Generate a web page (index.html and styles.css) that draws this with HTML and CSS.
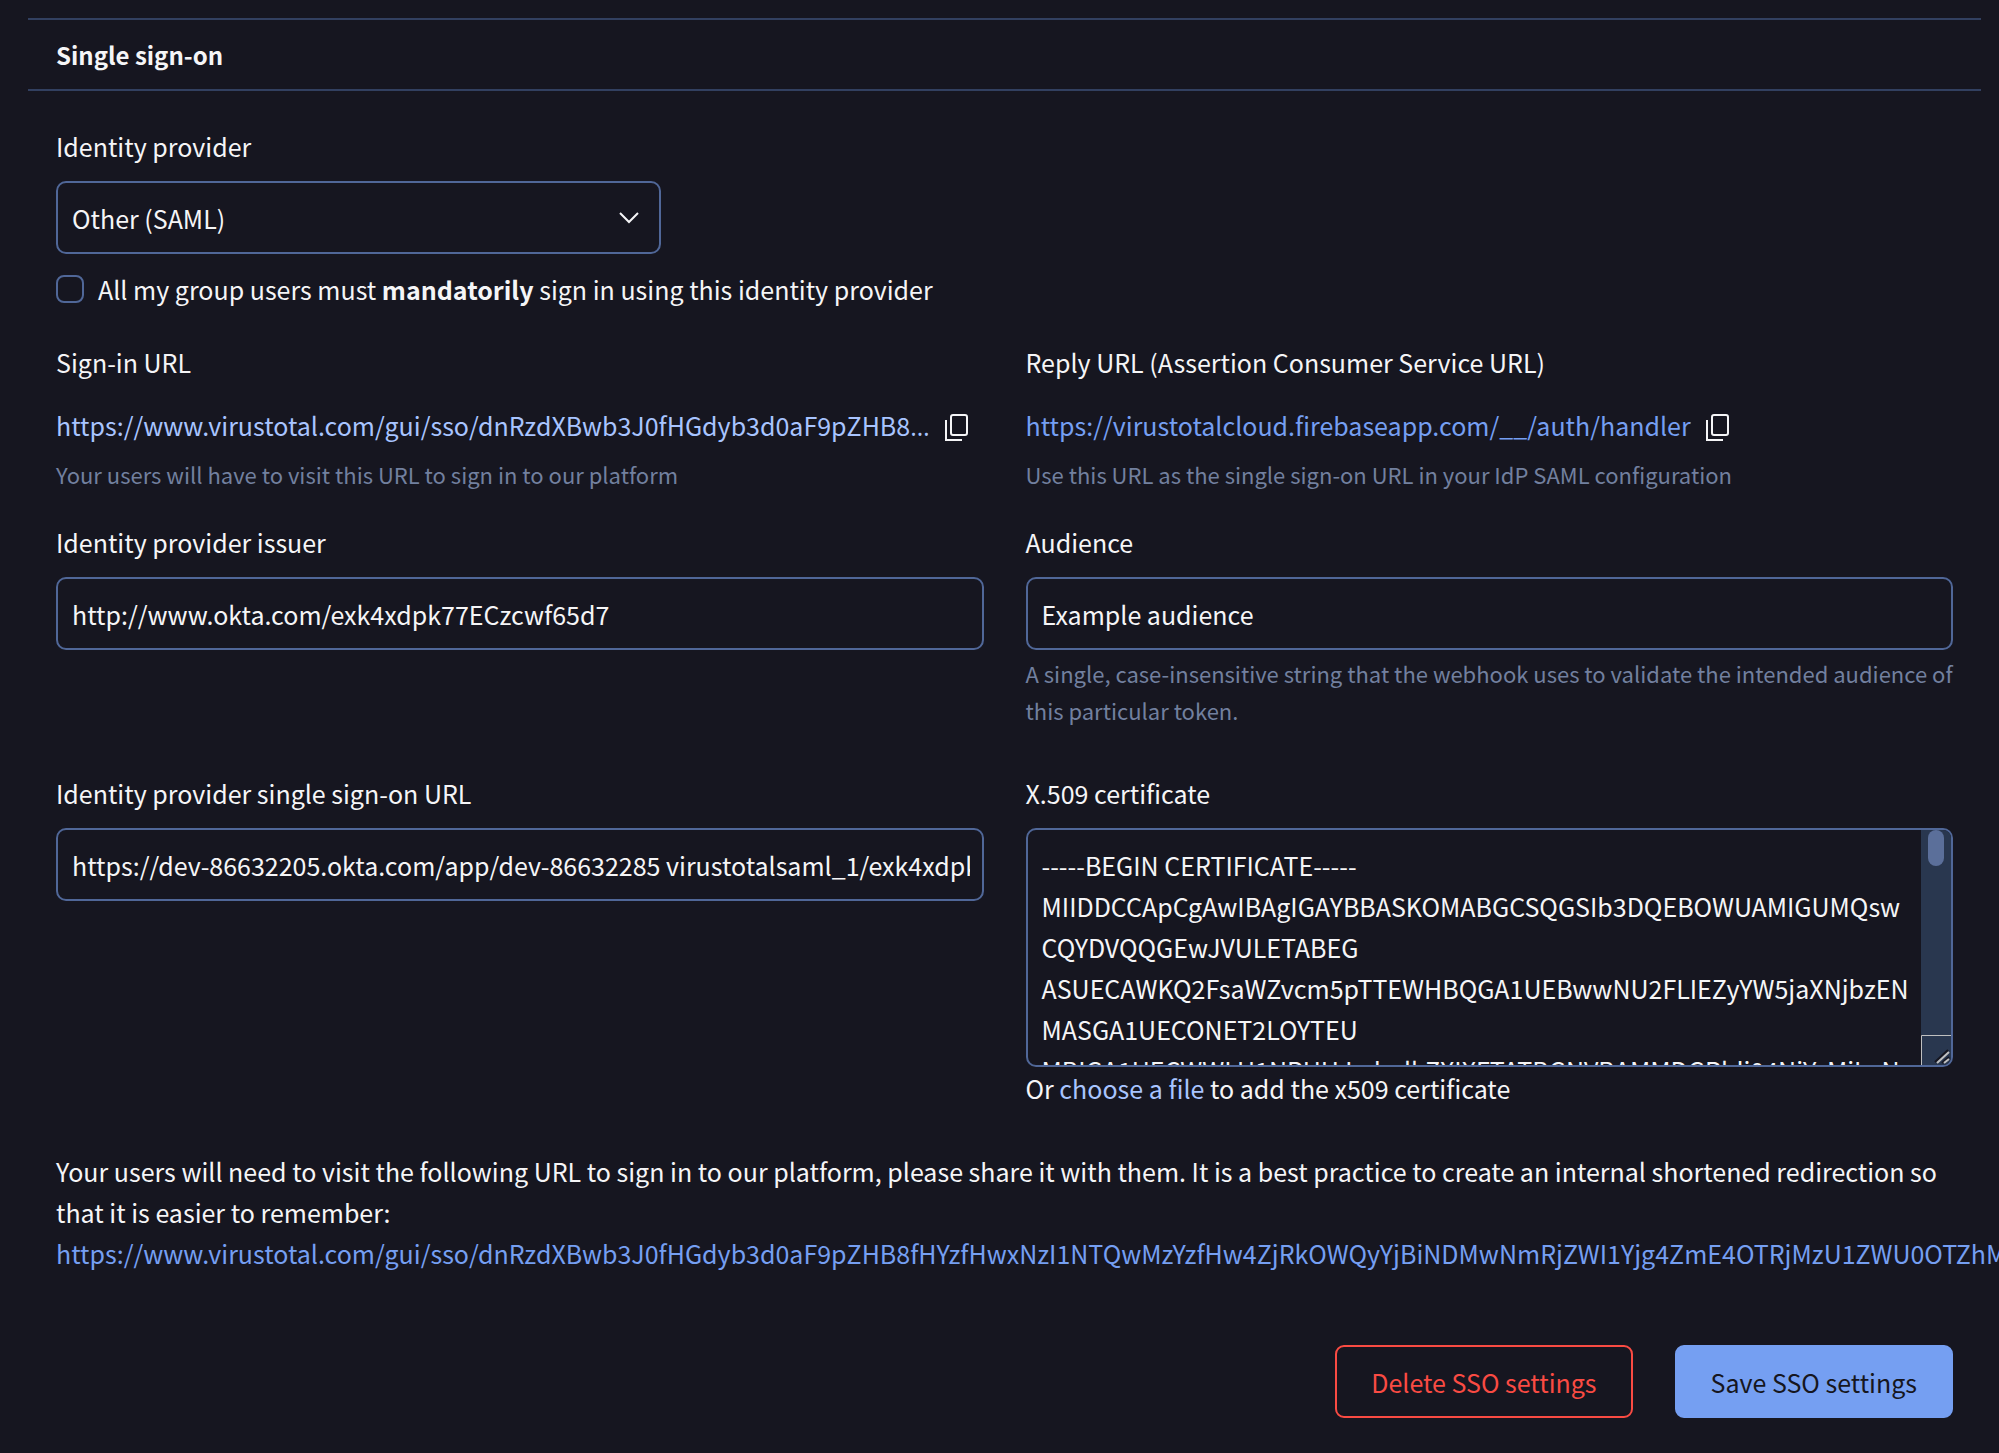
FILE: index.html
```html
<!DOCTYPE html>
<html lang="en">
<head>
<meta charset="utf-8">
<meta name="viewport" content="width=device-width, initial-scale=1">
<title>Single sign-on</title>
<link rel="stylesheet" href="styles.css">
</head>
<body>
<form class="sso">
  <h2 class="sso-title">Single sign-on</h2>
  <div class="sso-body">
    <div class="provider">
      <label class="label" for="provider">Identity provider</label>
      <div class="select">
        <select class="control" id="provider"><option>Other (SAML)</option></select>
        <svg class="chevron" viewBox="0 0 20 12" aria-hidden="true"><path d="M1 1l9 9 9-9"/></svg>
      </div>
    </div>
    <div class="check">
      <input class="check-box" type="checkbox" id="mandatory">
      <label for="mandatory">All my group users must <strong>mandatorily</strong> sign in using this identity provider</label>
    </div>
    <div class="grid">
      <div class="field">
        <h3 class="label">Sign-in URL</h3>
        <div class="url-row">
          <a class="url url-soft" href="#">https://www.virustotal.com/gui/sso/dnRzdXBwb3J0fHGdyb3d0aF9pZHB8<span class="ellipsis">…</span></a>
          <button class="copy" type="button" aria-label="Copy sign-in URL"><svg viewBox="0 -5 24 32" aria-hidden="true"><rect x="7" y="1" width="16" height="20" rx="2"/><path d="M2 6v20h16"/></svg></button>
        </div>
        <p class="hint">Your users will have to visit this URL to sign in to our platform</p>
      </div>
      <div class="field">
        <h3 class="label">Reply URL (Assertion Consumer Service URL)</h3>
        <div class="url-row">
          <a class="url" href="#">https://virustotalcloud.firebaseapp.com/__/auth/handler</a>
          <button class="copy" type="button" aria-label="Copy reply URL"><svg viewBox="0 -5 24 32" aria-hidden="true"><rect x="7" y="1" width="16" height="20" rx="2"/><path d="M2 6v20h16"/></svg></button>
        </div>
        <p class="hint">Use this URL as the single sign-on URL in your IdP SAML configuration</p>
      </div>
    </div>
    <div class="grid">
      <div class="field">
        <label class="label" for="issuer">Identity provider issuer</label>
        <input class="control" id="issuer" type="text" value="http://www.okta.com/exk4xdpk77ECzcwf65d7">
      </div>
      <div class="field">
        <label class="label" for="audience">Audience</label>
        <input class="control" id="audience" type="text" value="Example audience">
        <p class="hint">A single, case-insensitive string that the webhook uses to validate the intended audience of this particular token.</p>
      </div>
    </div>
    <div class="grid grid-certificate">
      <div class="field">
        <label class="label" for="sso-url">Identity provider single sign-on URL</label>
        <input class="control" id="sso-url" type="text" value="https://dev-86632205.okta.com/app/dev-86632285 virustotalsaml_1/exk4xdpk77ECzcwf65d7/sso/saml">
      </div>
      <div class="field">
        <label class="label" for="certificate">X.509 certificate</label>
        <div class="certificate-box">
          <textarea class="control certificate" id="certificate">-----BEGIN CERTIFICATE-----
MIIDDCCApCgAwIBAgIGAYBBASKOMABGCSQGSIb3DQEBOWUAMIGUMQsw
CQYDVQQGEwJVULETABEG
ASUECAWKQ2FsaWZvcm5pTTEWHBQGA1UEBwwNU2FLIEZyYW5jaXNjbzEN
MASGA1UECONET2LOYTEU
MBIGA1UECWWLU1NPUHJvdmlkZXIXFTATBGNVBAMMDGRldi04NjYzMjIwN
TEcMBoGCSqGSIb3DQEJ
-----END CERTIFICATE-----</textarea>
          <div class="scroll-track" aria-hidden="true">
            <span class="scroll-thumb"></span>
            <svg class="scroll-grip" viewBox="0 0 30 30"><path class="grip-frame" d="M0.500 30V0.500H30"/><path class="grip-shade" d="M14 27l13-12M21 28l7-6"/><path class="grip-line" d="M16 28l12-11M23 28l5-4"/></svg>
          </div>
        </div>
        <p>Or <a class="link-soft" href="#">choose a file</a> to add the x509 certificate</p>
      </div>
    </div>
    <p class="share">Your users will need to visit the following URL to sign in to our platform, please share it with them. It is a best practice to create an internal shortened redirection so that it is easier to remember: <a class="share-url" href="#">https://www.virustotal.com/gui/sso/dnRzdXBwb3J0fHGdyb3d0aF9pZHB8fHYzfHwxNzI1NTQwMzYzfHw4ZjRkOWQyYjBiNDMwNmRjZWI1Yjg4ZmE4OTRjMzU1ZWU0OTZhMGQ5</a></p>
    <div class="actions">
      <button class="button button-danger" type="button">Delete SSO settings</button>
      <button class="button button-primary" type="submit">Save SSO settings</button>
    </div>
  </div>
</form>
</body>
</html>
```

FILE: styles.css
```css
:root {
  --bg: #161620;
  --text: #f5f5f7;
  --line: #324060;
  --border: #506798;
  --link: #759ff2;
  --link-soft: #a8c4ff;
  --muted: #72809f;
  --track: #29374f;
  --thumb: #5b6f9a;
  --danger: #fa4b43;
}

* {
  box-sizing: border-box;
}

body {
  margin: 0;
  overflow-x: hidden;
  background: var(--bg);
  color: var(--text);
  font: 25px/42px "Noto Sans CJK SC", "Noto Sans", sans-serif;
}

a {
  color: var(--link);
  text-decoration: none;
}

h2, h3, p {
  margin: 0;
}

button, input, select, textarea {
  margin: 0;
  color: inherit;
  font: inherit;
}

.sso {
  padding: 18px 18px 34px 28px;
}

.sso-title {
  padding: 14px 28px;
  border-top: 2px solid var(--line);
  border-bottom: 2px solid var(--line);
  font-size: 24px;
  font-weight: 700;
  line-height: 41px;
}

.sso-body {
  padding: 34px 28px 0;
}

.label {
  display: block;
  margin-bottom: 14px;
  font-size: 25px;
  font-weight: 400;
}

.control {
  display: block;
  width: 100%;
  height: 73px;
  padding: 0 12px 0 14px;
  border: 2px solid var(--border);
  border-radius: 10px;
  background: transparent;
  outline: none;
}

.provider {
  max-width: 605px;
}

.select {
  display: grid;
  align-items: center;
}

.select .control {
  grid-area: 1 / 1;
  appearance: none;
}

.chevron {
  grid-area: 1 / 1;
  justify-self: end;
  width: 20px;
  height: 12px;
  margin-right: 22px;
  fill: none;
  stroke: var(--text);
  stroke-width: 2;
  pointer-events: none;
}

.check {
  display: flex;
  align-items: center;
  gap: 14px;
  margin: 14px 0 31px;
}

.check-box {
  appearance: none;
  width: 28px;
  height: 28px;
  border: 2px solid var(--border);
  border-radius: 8px;
}

.grid {
  display: grid;
  grid-template-columns: repeat(2, minmax(0, 1fr));
  gap: 42px;
  margin-bottom: 28px;
}

.url-row {
  display: flex;
  align-items: center;
  gap: 14px;
  margin: 21px 0 10px;
}

.url {
  white-space: nowrap;
}

.url-soft, .link-soft {
  color: var(--link-soft);
}

.ellipsis {
  font-family: "Open Sans", sans-serif;
  line-height: 1;
}

.copy {
  display: flex;
  flex: none;
  padding: 0;
  border: 0;
  background: none;
}

.copy svg {
  width: 24px;
  height: 32px;
  fill: none;
  stroke: var(--text);
  stroke-width: 2;
}

.hint {
  color: var(--muted);
  font-size: 22px;
  line-height: 37px;
}

.control + .hint {
  margin-top: 5px;
}

.grid-certificate {
  margin: 43px 0 42px;
}

.certificate-box {
  position: relative;
}

.certificate {
  height: 239px;
  padding: 15px 42px 0 14px;
  resize: none;
  scrollbar-width: none;
  line-height: 41px;
  white-space: pre;
}

/* Custom scrollbar laid over the right edge of the text area */
.scroll-track {
  position: absolute;
  inset: 2px 2px 2px auto;
  display: flex;
  flex-direction: column;
  align-items: center;
  justify-content: space-between;
  width: 30px;
  overflow: hidden;
  border-radius: 0 8px 8px 0;
  background: var(--track);
}

.scroll-thumb {
  width: 16px;
  height: 36px;
  border-radius: 8px;
  background: var(--thumb);
}

.scroll-grip {
  width: 30px;
  height: 30px;
  fill: none;
}

.grip-frame {
  stroke: #c0c0c0;
}

.grip-shade {
  stroke: var(--bg);
  stroke-width: 2;
}

.grip-line {
  stroke: #c0c0c0;
  stroke-width: 2;
}

.share {
  line-height: 41px;
}

.share-url {
  white-space: nowrap;
}

.actions {
  display: flex;
  justify-content: flex-end;
  gap: 42px;
  margin-top: 71px;
}

.button {
  height: 73px;
  padding: 0 34px;
  border: 2px solid;
  border-radius: 9px;
}

.button-danger {
  border-color: var(--danger);
  background: transparent;
  color: var(--danger);
}

.button-primary {
  border-color: var(--link);
  background: var(--link);
  color: var(--bg);
}
```
